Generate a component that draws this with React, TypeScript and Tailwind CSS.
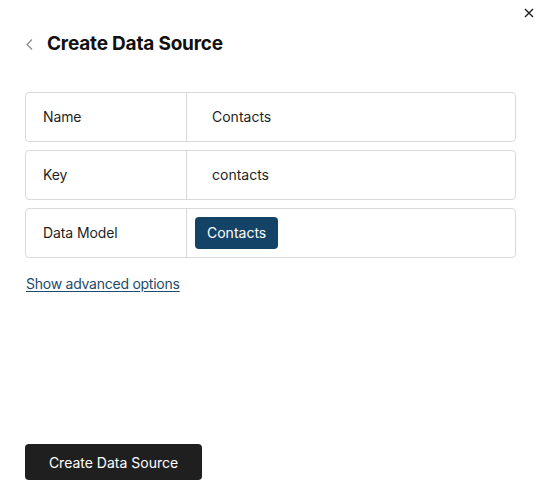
import React from 'react';

const font = { fontFamily: 'Inter, "Noto Sans", sans-serif' };

const Row = ({ label, children }: { label: string; children: React.ReactNode }) => (
  <div className="flex h-[50px] rounded border border-[#d9d9d9]">
    <div className="flex w-[161px] shrink-0 items-center border-r border-[#d9d9d9] pl-[17px] text-[14px] tracking-[-0.1px] text-[#1f1f1f]">
      {label}
    </div>
    <div className="flex flex-1 items-center">{children}</div>
  </div>
);

export default function App() {
  return (
    <div className="relative h-[491px] w-[540px] bg-white" style={font}>
      <button className="absolute right-[6px] top-[8px] text-[#1f1f1f]">
        <svg width="10" height="10" viewBox="0 0 10 10" fill="none" stroke="currentColor" strokeWidth="1.4">
          <path d="M1 1l8 8M9 1L1 9" />
        </svg>
      </button>

      <div className="flex h-full flex-col px-[25px] pb-[11px]">
        <div className="mt-[30px] flex items-center gap-[14px]">
          <svg width="7" height="11" viewBox="0 0 7 11" fill="none" stroke="#8a8a8a" strokeWidth="1.2" className="ml-[1px]">
            <path d="M6 0.5L1 5.5l5 5" />
          </svg>
          <h1 className="text-[19px] font-bold tracking-[-0.2px] text-[#111]">Create Data Source</h1>
        </div>

        <div className="mt-[33px] flex w-[491px] flex-col gap-[8px]">
          <Row label="Name">
            <span className="pl-[25px] text-[14px] text-[#1f1f1f]">Contacts</span>
          </Row>
          <Row label="Key">
            <span className="pl-[25px] text-[14px] text-[#1f1f1f]">contacts</span>
          </Row>
          <Row label="Data Model">
            <span className="ml-[8px] flex h-[32px] items-center rounded-[4px] bg-[#134468] px-[12px] text-[14px] text-white">
              Contacts
            </span>
          </Row>
        </div>

        <a href="#" className="mt-[15px] ml-[1px] self-start text-[14px] tracking-[-0.25px] text-[#1e4a6e] underline underline-offset-2">
          Show advanced options
        </a>

        <button className="mt-auto flex h-[36px] w-[177px] items-center justify-center rounded-[4px] bg-[#1f1f1f] text-[14px] text-white">
          Create Data Source
        </button>
      </div>
    </div>
  );
}
